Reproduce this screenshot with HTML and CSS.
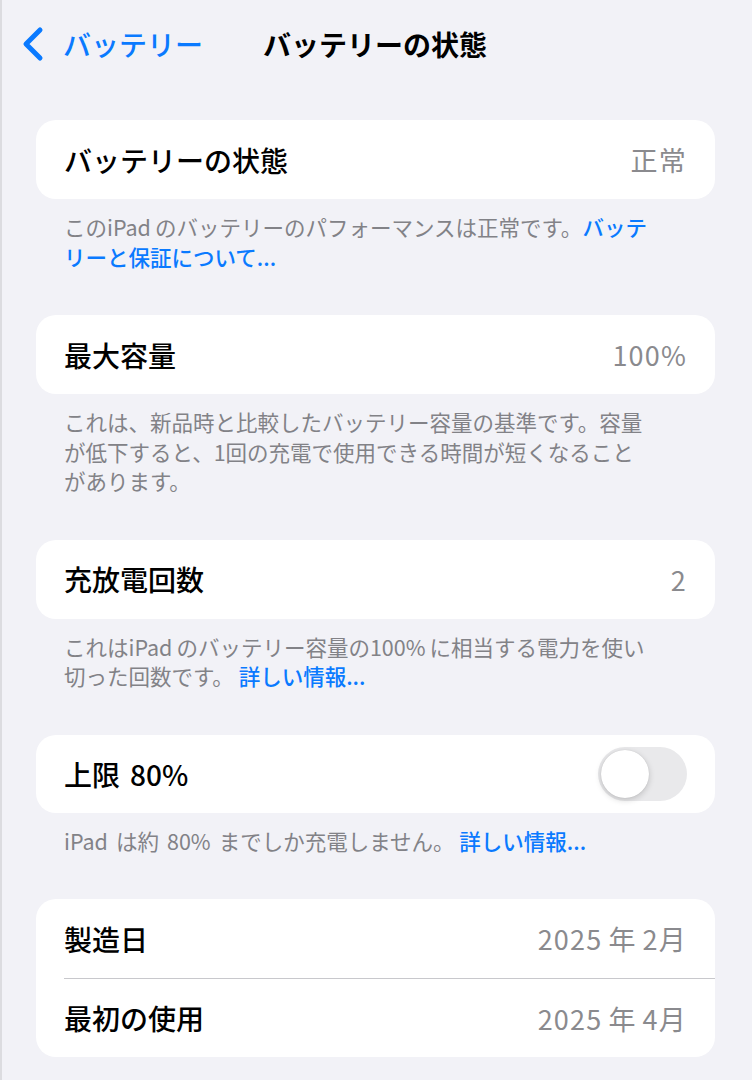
FILE: index.html
```html
<!DOCTYPE html>
<html lang="ja">
<head>
    <meta charset="UTF-8">
    <meta name="viewport" content="width=device-width, initial-scale=1.0">
    <title>バッテリーの状態</title>
    <link rel="stylesheet" href="styles.css">
</head>
<body>
    <header class="barra">
        <a class="volver" href="#">
            <svg class="chevron" width="24" height="36" viewBox="0 0 24 36">
                <path d="M19 4 L5 18 L19 32" fill="none" stroke="#0a7aff" stroke-width="5" stroke-linecap="round" stroke-linejoin="round"/>
            </svg>
            <span>バッテリー</span>
        </a>
        <h1 class="titulo">バッテリーの状態</h1>
    </header>

    <main class="contenido">
        <section class="grupo">
            <div class="tarjeta">
                <div class="fila">
                    <span class="etiqueta">バッテリーの状態</span>
                    <span class="valor">正常</span>
                </div>
            </div>
            <p class="nota">このiPad<span class="sep"></span>のバッテリーのパフォーマンスは正常です。<a href="#">バッテ<br>リーと保証について...</a></p>
        </section>

        <section class="grupo">
            <div class="tarjeta">
                <div class="fila">
                    <span class="etiqueta">最大容量</span>
                    <span class="valor">100%</span>
                </div>
            </div>
            <p class="nota">これは、新品時と比較したバッテリー容量の基準です。容量<br>が低下すると、1回の充電で使用できる時間が短くなること<br>があります。</p>
        </section>

        <section class="grupo">
            <div class="tarjeta">
                <div class="fila">
                    <span class="etiqueta">充放電回数</span>
                    <span class="valor">2</span>
                </div>
            </div>
            <p class="nota">これはiPad<span class="sep"></span>のバッテリー容量の100%<span class="sep"></span>に相当する電力を使い<br>切った回数です。 <a href="#">詳しい情報...</a></p>
        </section>

        <section class="grupo">
            <div class="tarjeta">
                <div class="fila fila-switch">
                    <span class="etiqueta">上限<span class="sep ancho"></span>80%</span>
                    <span class="interruptor"><span class="perilla"></span></span>
                </div>
            </div>
            <p class="nota">iPad<span class="sep ancho"></span>は約<span class="sep ancho"></span>80%<span class="sep ancho"></span>までしか充電しません。 <a href="#">詳しい情報...</a></p>
        </section>

        <section class="grupo">
            <div class="tarjeta">
                <div class="fila">
                    <span class="etiqueta">製造日</span>
                    <span class="valor">2025<span class="sep"></span>年<span class="sep"></span>2月</span>
                </div>
                <div class="fila">
                    <span class="etiqueta">最初の使用</span>
                    <span class="valor">2025<span class="sep"></span>年<span class="sep"></span>4月</span>
                </div>
            </div>
        </section>
    </main>
</body>
</html>
```

FILE: styles.css
```css
body {
    margin: 0;
    background: #f2f2f7;
    border-left: 2px solid #dcdce0;
    font-family: "Noto Sans CJK JP", "Noto Sans", sans-serif;
    color: #000;
    min-height: 1080px;
    box-sizing: border-box;
}

.barra {
    position: relative;
    height: 88px;
    display: flex;
    align-items: center;
}

.volver {
    display: flex;
    align-items: center;
    gap: 18px;
    padding-left: 19px;
    color: #0a7aff;
    text-decoration: none;
    font-size: 28px;
    font-weight: 500;
}

.titulo {
    position: absolute;
    left: 50%;
    top: 50%;
    transform: translate(-50%, -50%);
    margin: 0 0 0 -2px;
    font-size: 28px;
    font-weight: 700;
    white-space: nowrap;
}

.contenido {
    padding: 32px 37px 0 34px;
}

.grupo {
    margin-bottom: 44px;
}

.tarjeta {
    background: #fff;
    border-radius: 20px;
    overflow: hidden;
}

.fila {
    height: 79px;
    display: flex;
    align-items: center;
    justify-content: space-between;
    padding: 0 28px;
}

.fila + .fila {
    border-top: 1px solid #c8c8cc;
    margin-left: 28px;
    padding-left: 0;
    height: 78px;
}

.fila-switch {
    height: 78px;
}

.etiqueta {
    font-size: 28px;
    font-weight: 500;
}

.valor {
    font-size: 27px;
    color: #8a8a8e;
    letter-spacing: 1.2px;
}

/* espacio fino entre texto latino y japonés */
.sep {
    display: inline-block;
    width: 6px;
}

.etiqueta .sep.ancho {
    width: 10px;
}

.interruptor {
    width: 89px;
    height: 54px;
    border-radius: 27px;
    background: #e9e9eb;
    display: flex;
    align-items: center;
    padding: 0 3px;
    box-sizing: border-box;
}

.perilla {
    width: 48px;
    height: 48px;
    border-radius: 50%;
    background: #fff;
    box-shadow: 0 2px 6px rgba(0, 0, 0, 0.18), 0 0 1px rgba(0, 0, 0, 0.15);
}

.nota {
    margin: 13px 0 0 28px;
    font-size: 21.5px;
    line-height: 29.5px;
    color: #828287;
    white-space: nowrap;
}

.nota .sep {
    width: 4px;
}

.nota .sep.ancho {
    width: 8px;
}

.nota a {
    color: #0a7aff;
    text-decoration: none;
    font-weight: 500;
}
```
